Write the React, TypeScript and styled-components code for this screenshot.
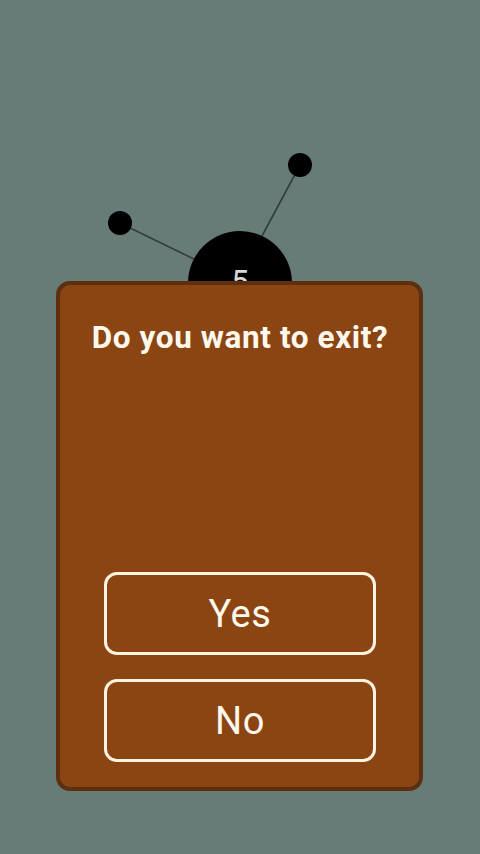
import React from "react";
import styled, { createGlobalStyle } from "styled-components";

const Global = createGlobalStyle`
  html, body { margin: 0; padding: 0; }
  body { background: #677b78; font-family: Roboto, "Liberation Sans", sans-serif; }
`;

const Stage = styled.div`
  position: relative;
  width: 480px;
  height: 854px;
  overflow: hidden;
  background: #677b78;
`;

const Scene = styled.svg`
  position: absolute;
  left: 0;
  top: 0;
  width: 480px;
  height: 854px;
`;

const Overlay = styled.div`
  position: absolute;
  inset: 0;
  display: flex;
  justify-content: center;
  align-items: flex-start;
  padding-top: 281px;
  box-sizing: border-box;
`;

const Dialog = styled.div`
  width: 367px;
  height: 510px;
  margin-left: -1px;
  box-sizing: border-box;
  background: #8b4513;
  border: 4px solid #5e2f0f;
  border-radius: 14px;
  display: flex;
  flex-direction: column;
  align-items: stretch;
  padding: 0 43px 25px 44px;
`;

const Title = styled.h1`
  margin: 35px -40px 0;
  text-align: center;
  color: #fff8ec;
  font-family: Roboto, "Liberation Sans", sans-serif;
  font-weight: 700;
  font-size: 31.5px;
  letter-spacing: 0.6px;
  line-height: 36px;
  white-space: nowrap;
`;

const Spacer = styled.div`
  flex: 1;
`;

const Buttons = styled.div`
  display: flex;
  flex-direction: column;
  gap: 24px;
`;

const Button = styled.button`
  height: 83px;
  box-sizing: border-box;
  background: transparent;
  border: 3px solid #fff3e2;
  border-radius: 13px;
  color: #fff8ec;
  font-family: Roboto, "Liberation Sans", sans-serif;
  font-weight: 400;
  font-size: 38px;
  letter-spacing: 0.6px;
  display: flex;
  align-items: center;
  justify-content: center;
  padding: 0;
  cursor: pointer;
`;

export default function App() {
  return (
    <Stage>
      <Global />
      <Scene viewBox="0 0 480 854">
        <line x1="120" y1="223" x2="200" y2="262" stroke="#333d3b" strokeWidth="1.6" />
        <line x1="300" y1="165" x2="262" y2="236" stroke="#333d3b" strokeWidth="1.6" />
        <circle cx="120" cy="223" r="12" fill="#000" />
        <circle cx="300" cy="165" r="12" fill="#000" />
        <circle cx="240" cy="283" r="52" fill="#000" />
        <text x="240" y="292" textAnchor="middle" fill="#d9d9d9" fontSize="31" fontFamily="Roboto, sans-serif">5</text>
      </Scene>
      <Overlay>
        <Dialog>
          <Title>Do you want to exit?</Title>
          <Spacer />
          <Buttons>
            <Button>Yes</Button>
            <Button>No</Button>
          </Buttons>
        </Dialog>
      </Overlay>
    </Stage>
  );
}
